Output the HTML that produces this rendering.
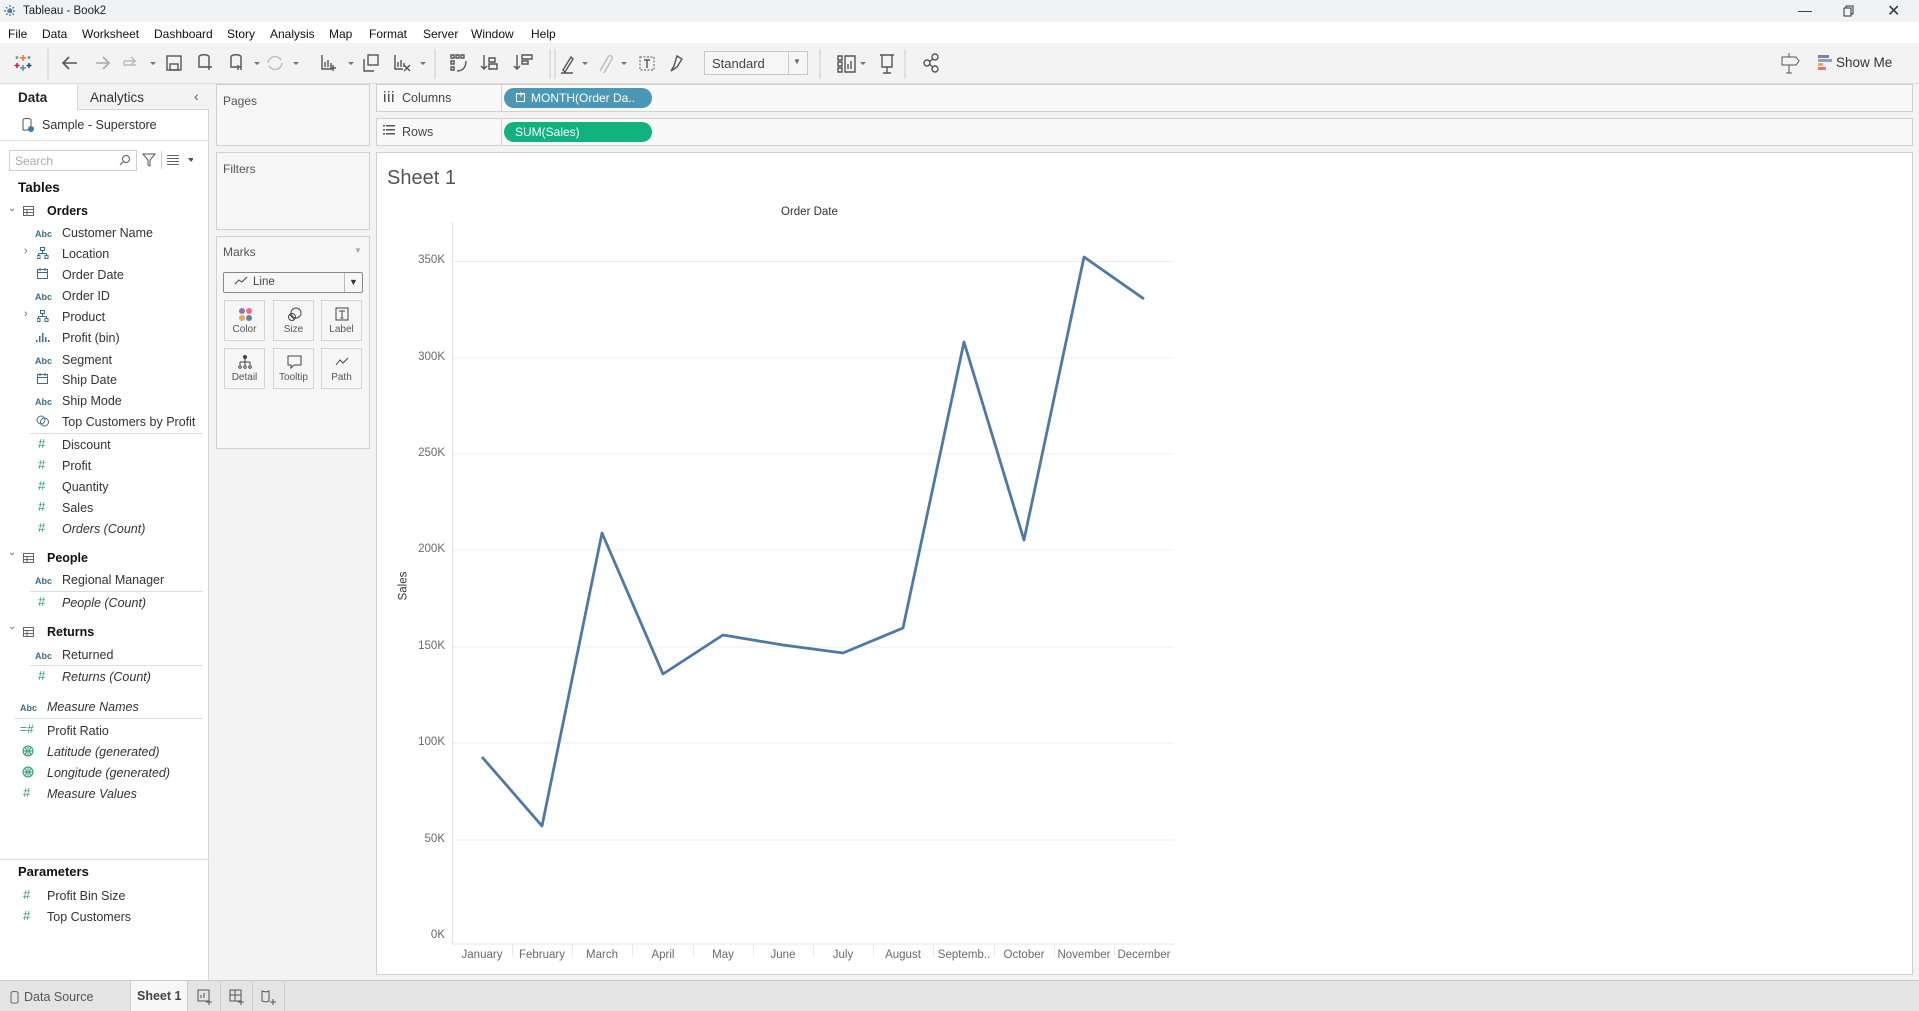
<!DOCTYPE html>
<html><head><meta charset="utf-8"><style>
*{margin:0;padding:0;box-sizing:border-box}
body{width:1919px;height:1011px;overflow:hidden;position:relative;background:#f3f3f3;font-family:"Liberation Sans",sans-serif;font-size:12px;color:#333}
.a{position:absolute}
.t{position:absolute;white-space:nowrap}
.ic{position:absolute}
.fld{position:absolute;white-space:nowrap;font-size:12.5px;color:#333}
.abc{position:absolute;font-size:9px;color:#3c6e8f;font-weight:bold}
.hash{position:absolute;font-size:13px;color:#2a9d6e}
.it{font-style:italic}
.box{position:absolute;background:#f6f6f6;border:1px solid #d0d0d0}
.mk{position:absolute;background:#f6f6f6;border:1px solid #d4d4d4;text-align:center;font-size:10px;color:#555}
.mk span{position:absolute;left:0;right:0;bottom:5px}
.yl{position:absolute;width:50px;text-align:right;font-size:11.5px;color:#6a6a6a}
.ml{position:absolute;width:60px;text-align:center;font-size:11.5px;color:#6a6a6a}
</style></head><body>
<div class="a" style="left:0;top:0;width:1919px;height:22px;background:#f1f2f6"></div>
<svg class="ic" style="left:3px;top:4px" width="14" height="14" viewBox="0 0 14 14" stroke="#3a6fa8" stroke-width="1.2"><path d="M7 1v12M1 7h12M3 3l8 8M11 3l-8 8" stroke-dasharray="2 1"/></svg>
<div class="t" style="left:23px;top:5px;font-size:11.5px;color:#222">Tableau - Book2</div>
<div class="t" style="left:1798px;top:2px;font-size:14px;color:#333">—</div>
<svg class="ic" style="left:1843px;top:5px" width="12" height="12"><rect x="1" y="3" width="7" height="8" fill="none" stroke="#333"/><path d="M3 3V1h7v8H8" fill="none" stroke="#333"/></svg>
<div class="t" style="left:1887px;top:1px;font-size:16px;color:#333">✕</div>
<div class="a" style="left:0;top:22px;width:1919px;height:21px;background:#fff"></div>
<div class="t" style="left:8px;top:27px;font-size:12px;color:#111">File</div>
<div class="t" style="left:42px;top:27px;font-size:12px;color:#111">Data</div>
<div class="t" style="left:82px;top:27px;font-size:12px;color:#111">Worksheet</div>
<div class="t" style="left:154px;top:27px;font-size:12px;color:#111">Dashboard</div>
<div class="t" style="left:227px;top:27px;font-size:12px;color:#111">Story</div>
<div class="t" style="left:270px;top:27px;font-size:12px;color:#111">Analysis</div>
<div class="t" style="left:329px;top:27px;font-size:12px;color:#111">Map</div>
<div class="t" style="left:369px;top:27px;font-size:12px;color:#111">Format</div>
<div class="t" style="left:423px;top:27px;font-size:12px;color:#111">Server</div>
<div class="t" style="left:471px;top:27px;font-size:12px;color:#111">Window</div>
<div class="t" style="left:531px;top:27px;font-size:12px;color:#111">Help</div>
<div class="a" style="left:0;top:43px;width:1919px;height:41px;background:#f3f3f3;border-bottom:1px solid #ddd"></div>
<svg class="a" style="left:0;top:43px" width="960" height="41" fill="none" stroke="#555" stroke-width="1.4">
<g stroke-width="1.5"><path d="M23 12v6M20 15h6" stroke="#e8762c"/><path d="M17 20v5M14.5 22.5h5" stroke="#c72037"/><path d="M29 20v5M26.5 22.5h5" stroke="#1f447e"/><path d="M23 22v6M20 25h6" stroke="#5b879b"/><path d="M17 13v3M15.5 14.5h3M29 13v3M27.5 14.5h3" stroke="#7099a6"/></g>
<path d="M48 6v30M435 6v30M555 6v30M550 6v30M820 6v30M905 6v30" stroke="#ccc" stroke-width="1"/>
<path d="M64 20h13M69 14l-6 6 6 6" stroke-width="1.6"/>
<path d="M96 20h13M103 14l6 6-6 6" stroke="#aaa" stroke-width="1.6"/>
<path d="M124 18h12M131 14l4 4-4 4M124 18v4h12" stroke="#bbb"/>
<rect x="167" y="13" width="14" height="14"/><rect x="170" y="21" width="8" height="6"/>
<path d="M199 14c0-3 10-3 10 0v10h-10z M206 24h6M209 21v6"/>
<path d="M231 14c0-3 10-3 10 0v10h-10z M238 22v5M241 22v5"/>
<path d="M268 20a7 7 0 0 1 13-3M282 20a7 7 0 0 1-13 3" stroke="#bbb"/>
<path d="M322 12v14h10M325 24v-5M328 24v-7M331 24v-4M333 22v6M330 25h6"/>
<rect x="368" y="12" width="10" height="10"/><path d="M364 16v12h10"/>
<path d="M395 12v14h8M398 24v-5M401 24v-7M404 24v-4M404 22l6 6M410 22l-6 6"/>
<path d="M451 12h3v3h-3zM456 12h3v3h-3zM461 12h3v3h-3zM451 18h3v3h-3zM451 24h3v3h-3zM457 28c5 0 9-3 9-10"/>
<path d="M484 12v14M481 23l3 3 3-3M489 15h6v4h-6zM489 21h8v5h-8z"/>
<path d="M517 12v14M514 23l3 3 3-3M522 12h10v4h-10zM522 18h6v3h-6z"/>
<path d="M563 27l8-13 2 2-8 13zM561 30h12"/>
<path d="M600 28l8-14a2 2 0 0 1 4 2l-8 14" stroke="#bbb"/>
<rect x="640" y="14" width="14" height="13" stroke-dasharray="2 1.5" stroke="#888"/><path d="M644 17h6M647 17v8"/>
<path d="M671 28l3-5 3-10 5 3-5 8z"/>
<path d="M838 13h4v4h-4zM838 19h4v4h-4zM838 25h4v4h-4zM845 13h10v16h-10zM848 26v-5M851 26v-8"/>
<path d="M880 12h14M882 12v12h10V12M887 24v6M883 30h8"/>
<circle cx="927" cy="20" r="3"/><circle cx="935" cy="14" r="3"/><circle cx="935" cy="26" r="3"/><path d="M929 19l4-3M929 21l4 3"/>
<path d="M150 19h6l-3 3zM254 19h6l-3 3zM293 19h6l-3 3zM348 19h6l-3 3zM420 19h6l-3 3zM582 19h6l-3 3zM621 19h6l-3 3zM860 19h6l-3 3z" fill="#777" stroke="none"/>
</svg>
<div class="a" style="left:704px;top:51px;width:104px;height:24px;border:1px solid #c8c8c8;background:#f6f6f6"></div>
<div class="a" style="left:788px;top:52px;width:1px;height:22px;background:#ccc"></div>
<div class="t" style="left:712px;top:56px;font-size:13px;color:#444">Standard</div>
<div class="t" style="left:793px;top:57px;font-size:8px;color:#666">▼</div>
<svg class="a" style="left:1780px;top:51px" width="20" height="24" fill="none" stroke="#555"><path d="M2 6h14l3 4-3 4H2zM9 2v4M9 14v8M6 22h6"/></svg>
<div class="a" style="left:1818px;top:55px;width:11px;height:3px;background:#8f7aa6"></div>
<div class="a" style="left:1818px;top:59px;width:14px;height:3px;background:#82a6cc"></div>
<div class="a" style="left:1818px;top:63px;width:5px;height:3px;background:#f2a55d"></div>
<div class="a" style="left:1818px;top:67px;width:8px;height:3px;background:#f26d7d"></div>
<div class="t" style="left:1836px;top:55px;font-size:13.5px;color:#333">Show Me</div>
<div class="a" style="left:0;top:85px;width:209px;height:895px;background:#fff;border-right:1px solid #d6d6d6"></div>
<div class="a" style="left:0;top:85px;width:77px;height:25px;background:#fff"></div>
<div class="a" style="left:77px;top:85px;width:132px;height:25px;background:#f3f3f3;border-left:1px solid #d6d6d6;border-bottom:1px solid #d6d6d6"></div>
<div class="t" style="left:18px;top:90px;font-size:13.5px;font-weight:bold;color:#222">Data</div>
<div class="t" style="left:90px;top:90px;font-size:13.5px;color:#333">Analytics</div>
<div class="t" style="left:194px;top:88px;font-size:14px;color:#555">‹</div>
<svg class="a" style="left:21px;top:117px" width="14" height="16" fill="none" stroke="#555"><path d="M2 3c0-2 8-2 8 0v10H2z"/><circle cx="10" cy="12" r="3" fill="#3c7ab3" stroke="none"/></svg>
<div class="t" style="left:42px;top:118px;font-size:12.5px;color:#333">Sample - Superstore</div>
<div class="a" style="left:0;top:140px;width:209px;height:1px;background:#e2e2e2"></div>
<div class="a" style="left:9px;top:150px;width:128px;height:21px;border:1px solid #cfcfcf;background:#fff"></div>
<div class="t" style="left:15px;top:154px;font-size:12px;color:#aaa">Search</div>
<svg class="a" style="left:118px;top:153px" width="14" height="14" fill="none" stroke="#555"><circle cx="8" cy="6" r="3.5"/><path d="M5.5 8.5L2 12"/></svg>
<svg class="a" style="left:141px;top:152px" width="16" height="16" fill="none" stroke="#555"><path d="M2 2h12l-5 6v6l-2-1V8z"/></svg>
<div class="a" style="left:161px;top:151px;width:1px;height:18px;background:#ccc"></div>
<svg class="a" style="left:167px;top:154px" width="26" height="12" fill="#666"><rect x="0" y="1" width="12" height="1"/><rect x="0" y="4" width="12" height="1"/><rect x="0" y="7" width="12" height="1"/><rect x="0" y="10" width="12" height="1"/><path d="M21 4h6l-3 4z" fill="#555"/></svg>
<div class="t" style="left:18px;top:180px;font-size:13.5px;font-weight:bold;color:#111">Tables</div>
<div class="t" style="left:8px;top:203px;font-size:10px;color:#666">⌄</div>
<svg class="a" style="left:23px;top:206px" width="12" height="11" fill="none" stroke="#666"><rect x="0.5" y="0.5" width="10" height="9"/><path d="M0.5 3.5h10M0.5 6.5h10M4 3.5v6"/></svg>
<div class="t" style="left:47px;top:204px;font-size:12.5px;font-weight:bold;color:#111">Orders</div>
<div class="abc" style="left:35px;top:229px">Abc</div><div class="fld" style="left:62px;top:226px">Customer Name</div>
<div class="t" style="left:24px;top:245px;font-size:11px;color:#666">›</div>
<svg class="a" style="left:37px;top:247px" width="12" height="12" fill="none" stroke="#3c6e8f"><rect x="3.5" y="0.5" width="4" height="3"/><path d="M5.5 3.5v3M1.5 6.5h8M1.5 6.5v2M9.5 6.5v2"/><rect x="0" y="8.5" width="3" height="3"/><rect x="8" y="8.5" width="3" height="3"/></svg>
<div class="fld" style="left:62px;top:247px">Location</div>
<svg class="a" style="left:37px;top:268px" width="12" height="12" fill="none" stroke="#3c6e8f"><rect x="0.5" y="1.5" width="10" height="9"/><path d="M0.5 4.5h10M3 0v3M8 0v3"/></svg>
<div class="fld" style="left:62px;top:268px">Order Date</div>
<div class="abc" style="left:35px;top:292px">Abc</div><div class="fld" style="left:62px;top:289px">Order ID</div>
<div class="t" style="left:24px;top:308px;font-size:11px;color:#666">›</div>
<svg class="a" style="left:37px;top:310px" width="12" height="12" fill="none" stroke="#3c6e8f"><rect x="3.5" y="0.5" width="4" height="3"/><path d="M5.5 3.5v3M1.5 6.5h8M1.5 6.5v2M9.5 6.5v2"/><rect x="0" y="8.5" width="3" height="3"/><rect x="8" y="8.5" width="3" height="3"/></svg>
<div class="fld" style="left:62px;top:310px">Product</div>
<svg class="a" style="left:36px;top:331px" width="14" height="12" fill="#3c6e8f"><rect x="0" y="9" width="1.5" height="2"/><rect x="3" y="5" width="1.5" height="6"/><rect x="6" y="2" width="1.5" height="9"/><rect x="9" y="6" width="1.5" height="5"/><rect x="12" y="9" width="1.5" height="2"/></svg>
<div class="fld" style="left:62px;top:331px">Profit (bin)</div>
<div class="abc" style="left:35px;top:356px">Abc</div><div class="fld" style="left:62px;top:353px">Segment</div>
<svg class="a" style="left:37px;top:373px" width="12" height="12" fill="none" stroke="#3c6e8f"><rect x="0.5" y="1.5" width="10" height="9"/><path d="M0.5 4.5h10M3 0v3M8 0v3"/></svg>
<div class="fld" style="left:62px;top:373px">Ship Date</div>
<div class="abc" style="left:35px;top:397px">Abc</div><div class="fld" style="left:62px;top:394px">Ship Mode</div>
<svg class="a" style="left:36px;top:414px" width="14" height="14" fill="none" stroke="#3c6e8f"><circle cx="5" cy="6" r="4"/><circle cx="8.5" cy="8" r="4"/></svg>
<div class="fld" style="left:62px;top:415px">Top Customers by Profit</div>
<div class="a" style="left:30px;top:433px;width:173px;height:1px;background:#ddd"></div>
<div class="hash" style="left:38px;top:436px">#</div><div class="fld" style="left:62px;top:438px">Discount</div>
<div class="hash" style="left:38px;top:457px">#</div><div class="fld" style="left:62px;top:459px">Profit</div>
<div class="hash" style="left:38px;top:478px">#</div><div class="fld" style="left:62px;top:480px">Quantity</div>
<div class="hash" style="left:38px;top:499px">#</div><div class="fld" style="left:62px;top:501px">Sales</div>
<div class="hash" style="left:38px;top:520px">#</div><div class="fld it" style="left:62px;top:522px">Orders (Count)</div>
<div class="t" style="left:8px;top:547px;font-size:10px;color:#666">⌄</div>
<svg class="a" style="left:23px;top:553px" width="12" height="11" fill="none" stroke="#666"><rect x="0.5" y="0.5" width="10" height="9"/><path d="M0.5 3.5h10M0.5 6.5h10M4 3.5v6"/></svg>
<div class="t" style="left:47px;top:551px;font-size:12.5px;font-weight:bold;color:#111">People</div>
<div class="abc" style="left:35px;top:576px">Abc</div><div class="fld" style="left:62px;top:573px">Regional Manager</div>
<div class="a" style="left:30px;top:591px;width:173px;height:1px;background:#ddd"></div>
<div class="hash" style="left:38px;top:594px">#</div><div class="fld it" style="left:62px;top:596px">People (Count)</div>
<div class="t" style="left:8px;top:621px;font-size:10px;color:#666">⌄</div>
<svg class="a" style="left:23px;top:627px" width="12" height="11" fill="none" stroke="#666"><rect x="0.5" y="0.5" width="10" height="9"/><path d="M0.5 3.5h10M0.5 6.5h10M4 3.5v6"/></svg>
<div class="t" style="left:47px;top:625px;font-size:12.5px;font-weight:bold;color:#111">Returns</div>
<div class="abc" style="left:35px;top:651px">Abc</div><div class="fld" style="left:62px;top:648px">Returned</div>
<div class="a" style="left:30px;top:665px;width:173px;height:1px;background:#ddd"></div>
<div class="hash" style="left:38px;top:668px">#</div><div class="fld it" style="left:62px;top:670px">Returns (Count)</div>
<div class="abc" style="left:20px;top:703px">Abc</div><div class="fld it" style="left:47px;top:700px">Measure Names</div>
<div class="a" style="left:15px;top:718px;width:188px;height:1px;background:#ddd"></div>
<div class="hash" style="left:20px;top:722px;font-size:12px">=#</div><div class="fld" style="left:47px;top:724px">Profit Ratio</div>
<svg class="a" style="left:22px;top:745px" width="12" height="12" fill="none" stroke="#2a9d6e"><circle cx="6" cy="6" r="5"/><path d="M1 6h10M6 1v10M3 2.5c2 2 2 5 0 7M9 2.5c-2 2-2 5 0 7"/></svg>
<div class="fld it" style="left:47px;top:745px">Latitude (generated)</div>
<svg class="a" style="left:22px;top:766px" width="12" height="12" fill="none" stroke="#2a9d6e"><circle cx="6" cy="6" r="5"/><path d="M1 6h10M6 1v10M3 2.5c2 2 2 5 0 7M9 2.5c-2 2-2 5 0 7"/></svg>
<div class="fld it" style="left:47px;top:766px">Longitude (generated)</div>
<div class="hash" style="left:23px;top:785px">#</div><div class="fld it" style="left:47px;top:787px">Measure Values</div>
<div class="a" style="left:0;top:859px;width:209px;height:1px;background:#ddd"></div>
<div class="t" style="left:18px;top:864px;font-size:13px;font-weight:bold;color:#111">Parameters</div>
<div class="hash" style="left:23px;top:887px">#</div><div class="fld" style="left:47px;top:889px">Profit Bin Size</div>
<div class="hash" style="left:23px;top:908px">#</div><div class="fld" style="left:47px;top:910px">Top Customers</div>
<div class="box" style="left:216px;top:84px;width:154px;height:62px"></div>
<div class="t" style="left:223px;top:94px;font-size:12px;color:#555">Pages</div>
<div class="box" style="left:216px;top:152px;width:154px;height:78px"></div>
<div class="t" style="left:223px;top:162px;font-size:12px;color:#555">Filters</div>
<div class="box" style="left:216px;top:236px;width:154px;height:213px"></div>
<div class="t" style="left:223px;top:245px;font-size:12px;color:#555">Marks</div>
<div class="t" style="left:354px;top:246px;font-size:8px;color:#aaa">▼</div>
<div class="a" style="left:223px;top:272px;width:140px;height:21px;border:1px solid #888;background:#f6f6f6;border-radius:2px"></div>
<div class="a" style="left:344px;top:273px;width:1px;height:19px;background:#bbb"></div>
<svg class="a" style="left:234px;top:276px" width="14" height="10" fill="none" stroke="#444"><path d="M1 8l4-4 3 2 5-5"/></svg>
<div class="t" style="left:253px;top:276px;font-size:11.5px;color:#444">Line</div>
<div class="t" style="left:349px;top:277px;font-size:9px;color:#333">▼</div>
<div class="mk" style="left:224px;top:300px;width:41px;height:41px"><svg style="position:absolute;left:13px;top:6px" width="15" height="15"><circle cx="4" cy="4" r="3" fill="#8f7aa6"/><circle cx="11" cy="4" r="3" fill="#f26d7d"/><circle cx="4" cy="11" r="3" fill="#f2a55d"/><circle cx="11" cy="11" r="3" fill="#5b879b"/></svg><span>Color</span></div>
<div class="mk" style="left:273px;top:300px;width:41px;height:41px"><svg style="position:absolute;left:13px;top:6px" width="15" height="15" fill="none" stroke="#444"><circle cx="9" cy="6" r="5"/><circle cx="5" cy="10" r="3.5"/><path d="M3 8l4 4"/></svg><span>Size</span></div>
<div class="mk" style="left:321px;top:300px;width:41px;height:41px"><svg style="position:absolute;left:13px;top:6px" width="15" height="15" fill="none" stroke="#444"><rect x="1" y="1" width="12" height="12"/><path d="M4 4h6M7 4v7M5.5 11h3"/></svg><span>Label</span></div>
<div class="mk" style="left:224px;top:348px;width:41px;height:41px"><svg style="position:absolute;left:13px;top:6px" width="15" height="15" fill="none" stroke="#444"><circle cx="7" cy="2" r="1.5" fill="#444"/><path d="M7 3v4M2 7h10M2 7v3M7 7v3M12 7v3"/><circle cx="2" cy="12" r="1.3"/><circle cx="7" cy="12" r="1.3"/><circle cx="12" cy="12" r="1.3"/></svg><span>Detail</span></div>
<div class="mk" style="left:273px;top:348px;width:41px;height:41px"><svg style="position:absolute;left:13px;top:6px" width="15" height="15" fill="none" stroke="#444"><path d="M1 1h13v9H7l-3 3v-3H1z"/></svg><span>Tooltip</span></div>
<div class="mk" style="left:321px;top:348px;width:41px;height:41px"><svg style="position:absolute;left:13px;top:8px" width="15" height="10" fill="none" stroke="#444"><path d="M1 8l4-5 3 3 5-5"/></svg><span>Path</span></div>
<div class="box" style="left:376px;top:84px;width:1537px;height:28px;background:#f9f9f9"></div>
<div class="a" style="left:501px;top:85px;width:1px;height:26px;background:#d0d0d0"></div>
<svg class="a" style="left:384px;top:91px" width="10" height="12" fill="#555"><rect x="0" y="3" width="1.5" height="8"/><rect x="4" y="3" width="1.5" height="8"/><rect x="8" y="3" width="1.5" height="8"/><rect x="0" y="0" width="1.5" height="1.5"/><rect x="4" y="0" width="1.5" height="1.5"/><rect x="8" y="0" width="1.5" height="1.5"/></svg>
<div class="t" style="left:402px;top:91px;font-size:12.5px;color:#444">Columns</div>
<div class="a" style="left:504px;top:88px;width:148px;height:20px;background:#4b97b8;border-radius:10px"></div>
<div class="a" style="left:516px;top:93px;width:9px;height:9px;border:1px solid #fff"></div>
<div class="t" style="left:518px;top:91px;font-size:10px;color:#fff;line-height:10px">+</div>
<div class="t" style="left:531px;top:91px;font-size:12px;color:#fff">MONTH(Order Da..</div>
<div class="box" style="left:376px;top:118px;width:1537px;height:28px;background:#f9f9f9"></div>
<div class="a" style="left:501px;top:119px;width:1px;height:26px;background:#d0d0d0"></div>
<svg class="a" style="left:383px;top:125px" width="12" height="10" fill="#555"><rect x="0" y="0" width="2" height="1.5"/><rect x="3" y="0" width="9" height="1.5"/><rect x="0" y="4" width="2" height="1.5"/><rect x="3" y="4" width="9" height="1.5"/><rect x="0" y="8" width="2" height="1.5"/><rect x="3" y="8" width="9" height="1.5"/></svg>
<div class="t" style="left:402px;top:125px;font-size:12.5px;color:#444">Rows</div>
<div class="a" style="left:504px;top:122px;width:148px;height:20px;background:#10b27d;border-radius:10px"></div>
<div class="t" style="left:515px;top:125px;font-size:12px;color:#fff">SUM(Sales)</div>
<div class="a" style="left:376px;top:152px;width:1537px;height:823px;background:#fff;border:1px solid #d0d0d0"></div>
<div class="t" style="left:387px;top:167px;font-size:20px;color:#555">Sheet 1</div>
<div class="t" style="left:781px;top:206px;font-size:11.5px;color:#333">Order Date</div>
<div class="t" style="left:389px;top:580px;font-size:11.5px;color:#333;transform:rotate(-90deg);transform-origin:center">Sales</div>
<svg class="a" style="left:0;top:0" width="1919" height="1011">
<g stroke="#ececec" stroke-width="1"><path d="M452 261.5H1174M452 358H1174M452 454H1174M452 550H1174M452 647H1174M452 743H1174M452 840H1174"/></g>
<path d="M452.5 222V944M452 944H1174" stroke="#e4e4e4"/>
<g stroke="#eaeaea"><path d="M512.5 944v12M572.5 944v12M632.5 944v12M693.5 944v12M753.5 944v12M813.5 944v12M873.5 944v12M933.5 944v12M994.5 944v12M1054.5 944v12M1114.5 944v12"/></g>
<polyline fill="none" stroke="#4e79a7" stroke-width="2.8" stroke-linejoin="round" points="482,757 542,826 602,533 663,674 723,635 783,645 843,653 903,628 964,342 1024,540 1084,257 1144,299"/>
</svg>
<div class="yl" style="left:395px;top:254px">350K</div>
<div class="yl" style="left:395px;top:351px">300K</div>
<div class="yl" style="left:395px;top:447px">250K</div>
<div class="yl" style="left:395px;top:543px">200K</div>
<div class="yl" style="left:395px;top:640px">150K</div>
<div class="yl" style="left:395px;top:736px">100K</div>
<div class="yl" style="left:395px;top:833px">50K</div>
<div class="yl" style="left:395px;top:929px">0K</div>
<div class="ml" style="left:452px;top:949px">January</div>
<div class="ml" style="left:512px;top:949px">February</div>
<div class="ml" style="left:572px;top:949px">March</div>
<div class="ml" style="left:633px;top:949px">April</div>
<div class="ml" style="left:693px;top:949px">May</div>
<div class="ml" style="left:753px;top:949px">June</div>
<div class="ml" style="left:813px;top:949px">July</div>
<div class="ml" style="left:873px;top:949px">August</div>
<div class="ml" style="left:934px;top:949px">Septemb..</div>
<div class="ml" style="left:994px;top:949px">October</div>
<div class="ml" style="left:1054px;top:949px">November</div>
<div class="ml" style="left:1114px;top:949px">December</div>
<div class="a" style="left:0;top:980px;width:1919px;height:31px;background:#e4e4e4;border-top:1px solid #ccc"></div>
<svg class="a" style="left:10px;top:991px" width="10" height="13" fill="none" stroke="#666"><path d="M1 2c0-2 7-2 7 0v9c0 1.5-7 1.5-7 0z"/></svg>
<div class="t" style="left:24px;top:990px;font-size:12.5px;color:#555">Data Source</div>
<div class="a" style="left:130px;top:981px;width:58px;height:30px;background:#f7f7f7;border-left:1px solid #ccc;border-right:1px solid #ccc"></div>
<div class="t" style="left:137px;top:989px;font-size:12.5px;font-weight:bold;color:#444">Sheet 1</div>
<div class="a" style="left:220px;top:981px;width:1px;height:30px;background:#ccc"></div>
<div class="a" style="left:252px;top:981px;width:1px;height:30px;background:#ccc"></div>
<div class="a" style="left:284px;top:981px;width:1px;height:30px;background:#ccc"></div>
<svg class="a" style="left:196px;top:988px" width="100" height="18" fill="none" stroke="#555"><rect x="2" y="2" width="11" height="11"/><path d="M5 10V7M8 10V5M10 14h6M13 11v6"/><rect x="34" y="2" width="11" height="11"/><path d="M34 7h11M39 2v11M42 14h6M45 11v6"/><path d="M66 3l4 1 3-1v10l-3 1-4-1zM74 14h6M77 11v6"/></svg>
</body></html>
